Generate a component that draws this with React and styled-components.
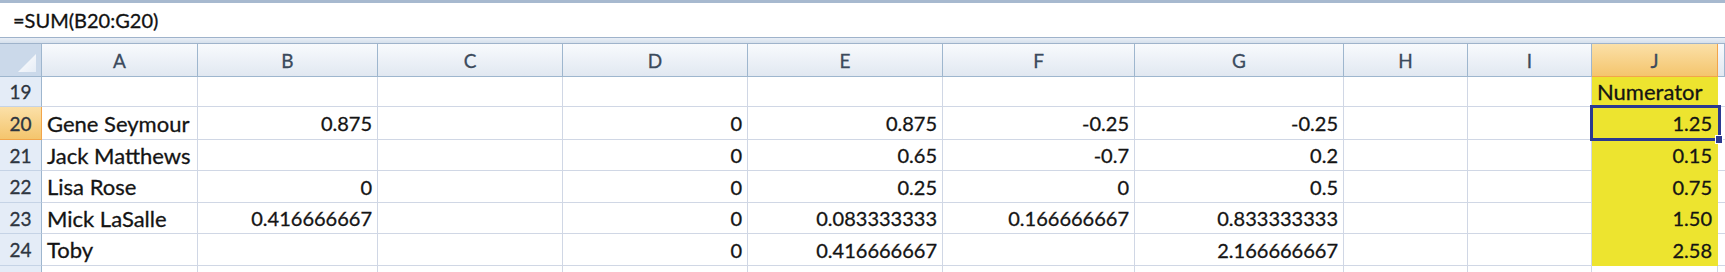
import React from 'react'
import styled, { createGlobalStyle } from 'styled-components'

const Global = createGlobalStyle`
  html, body {
    margin: 0;
    padding: 0;
    background: #ffffff;
    overflow: hidden;
  }
  body {
    font-family: 'Lato', 'Liberation Sans', sans-serif;
  }
`

const COLS = [42, 156, 180, 185, 185, 195, 192, 209, 124, 124, 126, 7]
const template = COLS.map(w => `${w}px`).join(' ')

const Wrap = styled.div`
  width: 1725px;
  height: 272px;
  overflow: hidden;
  background: #fff;
`

const FormulaBar = styled.div`
  height: 34px;
  border-top: 3px solid #a7b9cf;
  border-bottom: 1px solid #9fb3cb;
  display: flex;
  align-items: center;
  padding-left: 13px;
  font-size: 20px;
  color: #111;
  background: #fff;
  -webkit-text-stroke: 0.3px #111;
`

const Divider = styled.div`
  height: 5px;
  background: linear-gradient(#e8eef6, #d6e0ec);
  border-bottom: 1px solid #9fb3cb;
`

const Row = styled.div`
  display: grid;
  grid-template-columns: ${template};
  height: ${p => p.$h}px;
`

const Corner = styled.div`
  background: #cbd9ea;
  border-right: 1px solid #9eb6ce;
  border-bottom: 1px solid #9eb6ce;
  display: flex;
  align-items: flex-end;
  justify-content: flex-end;
  padding: 0 5px 4px 0;
  box-sizing: border-box;
`

const ColHead = styled.div`
  display: flex;
  align-items: center;
  justify-content: center;
  font-size: 19px;
  color: #3b4a5c;
  -webkit-text-stroke: 0.3px #3b4a5c;
  background: ${p => p.$active
    ? 'linear-gradient(#fbe0a8, #f4c56d)'
    : 'linear-gradient(#f8fafd, #e1e8f1)'};
  border-right: 1px solid ${p => p.$active ? '#f2a54a' : '#9eb6ce'};
  border-bottom: 1px solid ${p => p.$active ? '#f2a54a' : '#9eb6ce'};
  box-sizing: border-box;
`

const RowHead = styled.div`
  display: flex;
  align-items: center;
  justify-content: center;
  font-size: 19px;
  color: #2d3540;
  -webkit-text-stroke: 0.3px #2d3540;
  background: ${p => p.$active ? 'linear-gradient(#fbe0a8, #f4c56d)' : '#e4ecf7'};
  border-right: 1px solid ${p => p.$active ? '#f2a54a' : '#9eb6ce'};
  border-bottom: 1px solid ${p => p.$active ? '#f2a54a' : '#c5d3e6'};
  box-sizing: border-box;
`

const Cell = styled.div`
  position: relative;
  display: flex;
  align-items: center;
  justify-content: ${p => p.$num ? 'flex-end' : 'flex-start'};
  padding: ${p => p.$num ? '0 5px 0 4px' : '0 4px 0 5px'};
  font-size: ${p => p.$num ? 20 : 22}px;
  color: #141414;
  -webkit-text-stroke: 0.3px #141414;
  white-space: nowrap;
  background: ${p => p.$fill ? '#ede42f' : '#fff'};
  border-right: 1px solid ${p => p.$fill ? '#ede42f' : '#d0d7e5'};
  border-bottom: 1px solid ${p => p.$fill ? '#ede42f' : '#d0d7e5'};
  box-sizing: border-box;
`

const Selection = styled.div`
  position: absolute;
  z-index: 2;
  left: -2px;
  top: -2px;
  right: -4px;
  bottom: -2px;
  border: 3px solid #2b3990;
  pointer-events: none;
`

const Handle = styled.div`
  position: absolute;
  right: -5px;
  bottom: -6px;
  width: 6px;
  height: 7px;
  background: #2b3990;
  border: 1px solid #fff;
`

const headers = ['A', 'B', 'C', 'D', 'E', 'F', 'G', 'H', 'I', 'J', '']

const rows = [
  { n: 19, h: 30, cells: ['', '', '', '', '', '', '', '', '', 'Numerator'] },
  { n: 20, h: 33, cells: ['Gene Seymour', '0.875', '', '0', '0.875', '-0.25', '-0.25', '', '', '1.25'] },
  { n: 21, h: 31, cells: ['Jack Matthews', '', '', '0', '0.65', '-0.7', '0.2', '', '', '0.15'] },
  { n: 22, h: 32, cells: ['Lisa Rose', '0', '', '0', '0.25', '0', '0.5', '', '', '0.75'] },
  { n: 23, h: 31, cells: ['Mick LaSalle', '0.416666667', '', '0', '0.083333333', '0.166666667', '0.833333333', '', '', '1.50'] },
  { n: 24, h: 32, cells: ['Toby', '', '', '0', '0.416666667', '', '2.166666667', '', '', '2.58'] },
  { n: '', h: 10, cells: ['', '', '', '', '', '', '', '', '', ''] },
]

const isNumber = v => v !== '' && !isNaN(Number(v))

const CornerMark = () => (
  <svg width="18" height="18" viewBox="0 0 18 18">
    <defs>
      <linearGradient id="tri" x1="0" y1="0" x2="1" y2="1">
        <stop offset="0" stopColor="#ffffff" />
        <stop offset="1" stopColor="#e6edf6" />
      </linearGradient>
    </defs>
    <polygon points="18,0 18,18 0,18" fill="url(#tri)" />
  </svg>
)

export default function App() {
  return (
    <Wrap>
      <Global />
      <FormulaBar>=SUM(B20:G20)</FormulaBar>
      <Divider />
      <Row $h={33}>
        <Corner><CornerMark /></Corner>
        {headers.map((h, i) => (
          <ColHead key={i} $active={h === 'J'}>{h}</ColHead>
        ))}
      </Row>
      {rows.map(r => (
        <Row key={r.n || 'x'} $h={r.h}>
          <RowHead $active={r.n === 20}>{r.n}</RowHead>
          {r.cells.map((c, i) => {
            const isJ = i === 9
            return (
              <Cell key={i} $num={isNumber(c)} $fill={isJ && r.n !== ''}>
                {c}
                {isJ && r.n === 20 && (
                  <Selection><Handle /></Selection>
                )}
              </Cell>
            )
          })}
          <Cell />
        </Row>
      ))}
    </Wrap>
  )
}
